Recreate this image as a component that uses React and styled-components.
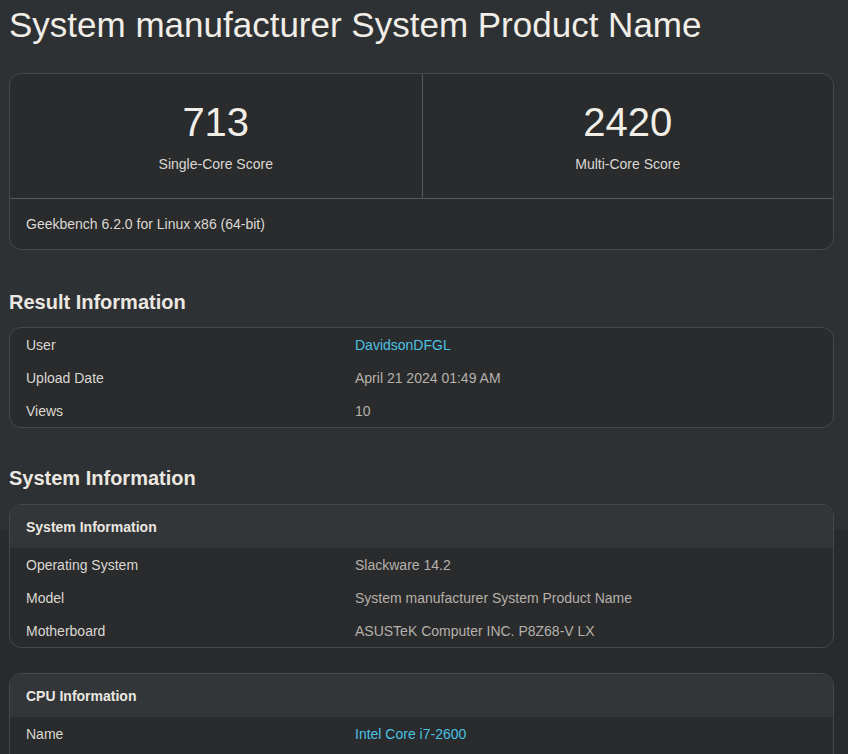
import React from 'react'
import styled, { createGlobalStyle } from 'styled-components'

const GlobalStyle = createGlobalStyle`
  html, body {
    margin: 0;
    padding: 0;
    background: #292a2c;
  }
  body {
    font-family: "Liberation Sans", Arial, sans-serif;
    color: #e2ded8;
  }
`

const Page = styled.div`
  background: linear-gradient(#2e3133 0, #2e3133 530px, #292a2c 530px);
  min-height: 754px;
  padding: 0 14px 40px 9px;
`

const Title = styled.h1`
  margin: 0;
  padding-top: 4px;
  font-size: 35px;
  font-weight: 400;
  line-height: 42px;
  color: #f1ede7;
`

const Card = styled.div`
  background: #292b2d;
  border: 1px solid #45484a;
  border-radius: 12px;
  overflow: hidden;
  margin-top: ${(p) => p.$top || 0}px;
`

const ScoreRow = styled.div`
  display: grid;
  grid-template-columns: 1fr 1fr;
  border-bottom: 1px solid #54585a;
`

const ScoreCell = styled.div`
  height: 124px;
  display: flex;
  flex-direction: column;
  align-items: center;
  padding-top: 25px;
  box-sizing: border-box;
  & + & {
    border-left: 1px solid #54585a;
  }
`

const ScoreValue = styled.div`
  font-size: 40px;
  line-height: 46px;
  color: #f1ede7;
`

const ScoreLabel = styled.div`
  margin-top: 10px;
  font-size: 14px;
  line-height: 18px;
  color: #dcd8d2;
`

const CardFooter = styled.div`
  height: 50px;
  display: flex;
  align-items: center;
  padding: 0 16px;
  font-size: 14px;
  color: #dcd8d2;
`

const SectionTitle = styled.h2`
  margin: ${(p) => p.$top}px 0 ${(p) => p.$bottom || 14}px;
  font-size: 20px;
  line-height: 24px;
  font-weight: 700;
  color: #ebe7e1;
`

const CardHeader = styled.div`
  height: 43px;
  display: flex;
  align-items: center;
  padding: 0 16px;
  background: #323638;
  font-size: 14px;
  font-weight: 700;
  color: #ebe7e1;
`

const Row = styled.div`
  display: grid;
  grid-template-columns: 329px 1fr;
  height: 33px;
  align-items: center;
  padding: 0 16px;
  font-size: 14px;
`

const Label = styled.div`
  color: #dcd8d2;
`

const Value = styled.div`
  color: ${(p) => (p.$link ? '#4cc2e2' : '#b6b1ab')};
`

function InfoRows({ rows }) {
  return rows.map(([label, value, link]) => (
    <Row key={label}>
      <Label>{label}</Label>
      <Value $link={link}>{value}</Value>
    </Row>
  ))
}

export default function App() {
  return (
    <>
      <GlobalStyle />
      <Page>
        <Title>System manufacturer System Product Name</Title>

        <Card $top={27}>
          <ScoreRow>
            <ScoreCell>
              <ScoreValue>713</ScoreValue>
              <ScoreLabel>Single-Core Score</ScoreLabel>
            </ScoreCell>
            <ScoreCell>
              <ScoreValue>2420</ScoreValue>
              <ScoreLabel>Multi-Core Score</ScoreLabel>
            </ScoreCell>
          </ScoreRow>
          <CardFooter>Geekbench 6.2.0 for Linux x86 (64-bit)</CardFooter>
        </Card>

        <SectionTitle $top={40} $bottom={13}>
          Result Information
        </SectionTitle>
        <Card>
          <InfoRows
            rows={[
              ['User', 'DavidsonDFGL', true],
              ['Upload Date', 'April 21 2024 01:49 AM'],
              ['Views', '10'],
            ]}
          />
        </Card>

        <SectionTitle $top={38}>System Information</SectionTitle>
        <Card>
          <CardHeader>System Information</CardHeader>
          <InfoRows
            rows={[
              ['Operating System', 'Slackware 14.2'],
              ['Model', 'System manufacturer System Product Name'],
              ['Motherboard', 'ASUSTeK Computer INC. P8Z68-V LX'],
            ]}
          />
        </Card>

        <Card $top={25}>
          <CardHeader>CPU Information</CardHeader>
          <InfoRows
            rows={[
              ['Name', 'Intel Core i7-2600', true],
              ['Topology', '1 Processor, 4 Cores, 8 Threads'],
              ['Identifier', 'GenuineIntel Family 6 Model 42 Stepping 7'],
            ]}
          />
        </Card>
      </Page>
    </>
  )
}
